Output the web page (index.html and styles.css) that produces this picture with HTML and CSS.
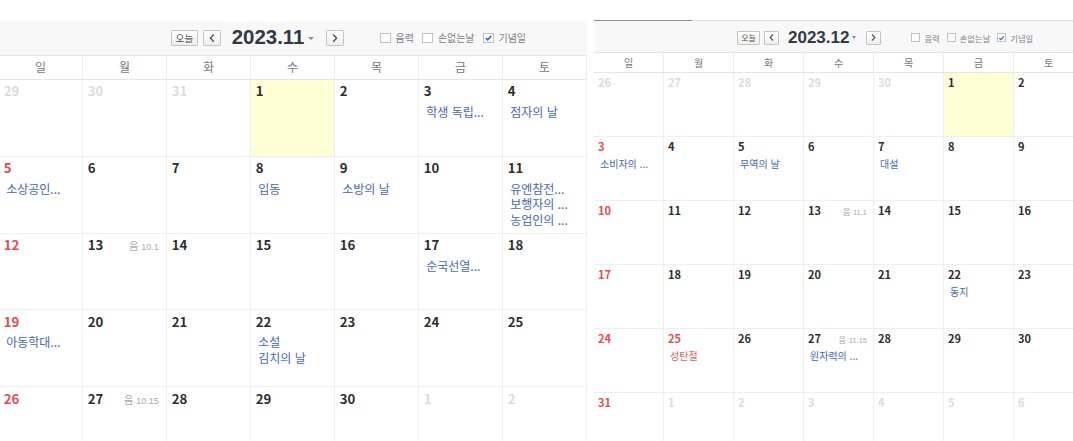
FILE: index.html
```html
<!DOCTYPE html>
<html lang="ko">
<head>
<meta charset="utf-8">
<title>달력</title>
<link rel="stylesheet" href="styles.css">
</head>
<body>
<div class="page">
  <section class="panel panel--left">
    <div class="cal cal--big">
      <div class="cal-head">
        <button class="btn btn--today">오늘</button>
        <button class="btn btn--arrow"><svg width="5" height="7" viewBox="0 0 5 7"><path d="M4 0.5L1.2 3.5L4 6.5" fill="none" stroke="#555" stroke-width="1.2"/></svg></button>
        <span class="title">2023.11</span>
        <span class="caret"></span>
        <button class="btn btn--arrow btn--next"><svg width="5" height="7" viewBox="0 0 5 7"><path d="M1 0.5L3.8 3.5L1 6.5" fill="none" stroke="#555" stroke-width="1.2"/></svg></button>
        <label class="chk chk--first"><span class="box"></span>음력</label>
        <label class="chk"><span class="box"></span>손없는날</label>
        <label class="chk"><span class="box"><svg width="8" height="8" viewBox="0 0 10 10"><path d="M2 5.2L4.2 7.4L8.2 2.8" fill="none" stroke="#2f68c8" stroke-width="1.8"/></svg></span>기념일</label>
      </div>
      <div class="dow"><span>일</span><span>월</span><span>화</span><span>수</span><span>목</span><span>금</span><span>토</span></div>
      <div class="week">
        <div class="cell off"><div class="top"><span class="num">29</span></div></div>
        <div class="cell off"><div class="top"><span class="num">30</span></div></div>
        <div class="cell off"><div class="top"><span class="num">31</span></div></div>
        <div class="cell today"><div class="top"><span class="num">1</span></div></div>
        <div class="cell"><div class="top"><span class="num">2</span></div></div>
        <div class="cell"><div class="top"><span class="num">3</span></div><div class="events"><p class="ev">학생 독립...</p></div></div>
        <div class="cell"><div class="top"><span class="num">4</span></div><div class="events"><p class="ev">점자의 날</p></div></div>
      </div>
      <div class="week">
        <div class="cell sun"><div class="top"><span class="num">5</span></div><div class="events"><p class="ev">소상공인...</p></div></div>
        <div class="cell"><div class="top"><span class="num">6</span></div></div>
        <div class="cell"><div class="top"><span class="num">7</span></div></div>
        <div class="cell"><div class="top"><span class="num">8</span></div><div class="events"><p class="ev">입동</p></div></div>
        <div class="cell"><div class="top"><span class="num">9</span></div><div class="events"><p class="ev">소방의 날</p></div></div>
        <div class="cell"><div class="top"><span class="num">10</span></div></div>
        <div class="cell"><div class="top"><span class="num">11</span></div><div class="events"><p class="ev">유엔참전...</p><p class="ev">보행자의 ...</p><p class="ev">농업인의 ...</p></div></div>
      </div>
      <div class="week">
        <div class="cell sun"><div class="top"><span class="num">12</span></div></div>
        <div class="cell"><div class="top"><span class="num">13</span><span class="lunar">음 <b>10.1</b></span></div></div>
        <div class="cell"><div class="top"><span class="num">14</span></div></div>
        <div class="cell"><div class="top"><span class="num">15</span></div></div>
        <div class="cell"><div class="top"><span class="num">16</span></div></div>
        <div class="cell"><div class="top"><span class="num">17</span></div><div class="events"><p class="ev">순국선열...</p></div></div>
        <div class="cell"><div class="top"><span class="num">18</span></div></div>
      </div>
      <div class="week">
        <div class="cell sun"><div class="top"><span class="num">19</span></div><div class="events"><p class="ev">아동학대...</p></div></div>
        <div class="cell"><div class="top"><span class="num">20</span></div></div>
        <div class="cell"><div class="top"><span class="num">21</span></div></div>
        <div class="cell"><div class="top"><span class="num">22</span></div><div class="events"><p class="ev">소설</p><p class="ev">김치의 날</p></div></div>
        <div class="cell"><div class="top"><span class="num">23</span></div></div>
        <div class="cell"><div class="top"><span class="num">24</span></div></div>
        <div class="cell"><div class="top"><span class="num">25</span></div></div>
      </div>
      <div class="week">
        <div class="cell sun"><div class="top"><span class="num">26</span></div></div>
        <div class="cell"><div class="top"><span class="num">27</span><span class="lunar">음 <b>10.15</b></span></div></div>
        <div class="cell"><div class="top"><span class="num">28</span></div></div>
        <div class="cell"><div class="top"><span class="num">29</span></div></div>
        <div class="cell"><div class="top"><span class="num">30</span></div></div>
        <div class="cell off"><div class="top"><span class="num">1</span></div></div>
        <div class="cell off"><div class="top"><span class="num">2</span></div></div>
      </div>
    </div>
  </section>

  <section class="panel panel--right">
    <div class="tabs"><span class="tab-on"></span><span class="tab-off"></span></div>
    <div class="cal">
      <div class="cal-head">
        <button class="btn btn--today">오늘</button>
        <button class="btn btn--arrow"><svg width="5" height="7" viewBox="0 0 5 7"><path d="M4 0.5L1.2 3.5L4 6.5" fill="none" stroke="#555" stroke-width="1.2"/></svg></button>
        <span class="title">2023.12</span>
        <span class="caret"></span>
        <button class="btn btn--arrow btn--next"><svg width="5" height="7" viewBox="0 0 5 7"><path d="M1 0.5L3.8 3.5L1 6.5" fill="none" stroke="#555" stroke-width="1.2"/></svg></button>
        <label class="chk chk--first"><span class="box"></span>음력</label>
        <label class="chk"><span class="box"></span>손없는날</label>
        <label class="chk"><span class="box"><svg width="8" height="8" viewBox="0 0 10 10"><path d="M2 5.2L4.2 7.4L8.2 2.8" fill="none" stroke="#2f68c8" stroke-width="1.8"/></svg></span>기념일</label>
      </div>
      <div class="dow"><span>일</span><span>월</span><span>화</span><span>수</span><span>목</span><span>금</span><span>토</span></div>
      <div class="week">
        <div class="cell off"><div class="top"><span class="num">26</span></div></div>
        <div class="cell off"><div class="top"><span class="num">27</span></div></div>
        <div class="cell off"><div class="top"><span class="num">28</span></div></div>
        <div class="cell off"><div class="top"><span class="num">29</span></div></div>
        <div class="cell off"><div class="top"><span class="num">30</span></div></div>
        <div class="cell today"><div class="top"><span class="num">1</span></div></div>
        <div class="cell"><div class="top"><span class="num">2</span></div></div>
      </div>
      <div class="week">
        <div class="cell sun"><div class="top"><span class="num">3</span></div><div class="events"><p class="ev">소비자의 ...</p></div></div>
        <div class="cell"><div class="top"><span class="num">4</span></div></div>
        <div class="cell"><div class="top"><span class="num">5</span></div><div class="events"><p class="ev">무역의 날</p></div></div>
        <div class="cell"><div class="top"><span class="num">6</span></div></div>
        <div class="cell"><div class="top"><span class="num">7</span></div><div class="events"><p class="ev">대설</p></div></div>
        <div class="cell"><div class="top"><span class="num">8</span></div></div>
        <div class="cell"><div class="top"><span class="num">9</span></div></div>
      </div>
      <div class="week">
        <div class="cell sun"><div class="top"><span class="num">10</span></div></div>
        <div class="cell"><div class="top"><span class="num">11</span></div></div>
        <div class="cell"><div class="top"><span class="num">12</span></div></div>
        <div class="cell"><div class="top"><span class="num">13</span><span class="lunar">음 <b>11.1</b></span></div></div>
        <div class="cell"><div class="top"><span class="num">14</span></div></div>
        <div class="cell"><div class="top"><span class="num">15</span></div></div>
        <div class="cell"><div class="top"><span class="num">16</span></div></div>
      </div>
      <div class="week">
        <div class="cell sun"><div class="top"><span class="num">17</span></div></div>
        <div class="cell"><div class="top"><span class="num">18</span></div></div>
        <div class="cell"><div class="top"><span class="num">19</span></div></div>
        <div class="cell"><div class="top"><span class="num">20</span></div></div>
        <div class="cell"><div class="top"><span class="num">21</span></div></div>
        <div class="cell"><div class="top"><span class="num">22</span></div><div class="events"><p class="ev">동지</p></div></div>
        <div class="cell"><div class="top"><span class="num">23</span></div></div>
      </div>
      <div class="week">
        <div class="cell sun"><div class="top"><span class="num">24</span></div></div>
        <div class="cell sun"><div class="top"><span class="num">25</span></div><div class="events"><p class="ev ev--holiday">성탄절</p></div></div>
        <div class="cell"><div class="top"><span class="num">26</span></div></div>
        <div class="cell"><div class="top"><span class="num">27</span><span class="lunar">음 <b>11.15</b></span></div><div class="events"><p class="ev">원자력의 ...</p></div></div>
        <div class="cell"><div class="top"><span class="num">28</span></div></div>
        <div class="cell"><div class="top"><span class="num">29</span></div></div>
        <div class="cell"><div class="top"><span class="num">30</span></div></div>
      </div>
      <div class="week">
        <div class="cell sun"><div class="top"><span class="num">31</span></div></div>
        <div class="cell off"><div class="top"><span class="num">1</span></div></div>
        <div class="cell off"><div class="top"><span class="num">2</span></div></div>
        <div class="cell off"><div class="top"><span class="num">3</span></div></div>
        <div class="cell off"><div class="top"><span class="num">4</span></div></div>
        <div class="cell off"><div class="top"><span class="num">5</span></div></div>
        <div class="cell off"><div class="top"><span class="num">6</span></div></div>
      </div>
    </div>
  </section>
</div>
</body>
</html>
```

FILE: styles.css
```css
* { box-sizing: border-box; }

html, body {
  margin: 0;
  padding: 0;
  background: #fff;
  overflow: hidden;
}

body {
  width: 1073px;
  height: 441px;
  font-family: "Noto Sans CJK KR", "Noto Sans", sans-serif;
  color: #333;
}

.page {
  display: flex;
  align-items: flex-start;
  width: 1073px;
  height: 441px;
  overflow: hidden;
}

.panel {
  overflow: hidden;
  flex: none;
}

.panel--left {
  width: 587px;
  height: 420px;
  margin-top: 21px;
}

.panel--right {
  width: 479px;
  height: 421px;
  margin-top: 20px;
  margin-left: 7px;
}

.tabs {
  display: flex;
  height: 1px;
  width: 490px;
}

.tab-on {
  width: 98px;
  background: #8a9098;
}

.tab-off {
  flex: 1;
  background: #dedede;
}

.cal {
  width: 490px;
}

.cal--big {
  zoom: 1.2;
  margin-left: -0.84px;
}

/* header */
.cal-head {
  display: flex;
  align-items: center;
  height: 32px;
  padding: 2px 0 0 143px;
  background: #f8f8f8;
  border-bottom: 1px solid #e3e3e3;
}

.cal--big .cal-head {
  height: 29.2px;
  padding-top: 0;
}

.btn {
  display: flex;
  align-items: center;
  justify-content: center;
  height: 14px;
  padding: 0;
  margin: 0;
  border: 1px solid #c4c4c4;
  border-radius: 1px;
  background: linear-gradient(#ffffff, #eeeeee);
  font-family: "Noto Sans CJK KR", sans-serif;
  font-size: 8px;
  line-height: 12px;
  color: #555;
}

.btn--today {
  width: 23px;
}

.btn--arrow {
  width: 15px;
  margin-left: 4px;
}

.btn--next {
  margin-left: 10px;
}

.title {
  margin-left: 9px;
  font-family: "Liberation Sans", Arial, sans-serif;
  font-weight: 700;
  font-size: 17px;
  line-height: 18px;
  color: #333947;
}

.caret {
  margin-left: 3px;
  width: 0;
  height: 0;
  border-left: 2.5px solid transparent;
  border-right: 2.5px solid transparent;
  border-top: 3px solid #8a8a8a;
}

.chk {
  display: flex;
  align-items: center;
  gap: 4px;
  margin-right: 7px;
  font-size: 8.3px;
  line-height: 12px;
  color: #808080;
}

.chk--first {
  margin-left: 30px;
}

.box {
  display: flex;
  align-items: center;
  justify-content: center;
  width: 9px;
  height: 9px;
  border: 1px solid #c2c2c2;
  background: #fff;
}

/* day of week row */
.dow {
  display: flex;
  height: 20px;
  border-bottom: 1px solid #e6e6e6;
}

.dow span {
  width: 70px;
  text-align: center;
  font-size: 10px;
  line-height: 19px;
  color: #777;
  border-right: 1px solid #ededed;
}

/* weeks */
.week {
  display: flex;
  height: 64px;
  border-bottom: 1px solid #efefef;
}

.cell {
  width: 70px;
  flex: none;
  padding: 2px 6px 0 4px;
  border-right: 1px solid #efefef;
}

.cell.today {
  background: #ffffd6;
}

.top {
  display: flex;
  justify-content: space-between;
  align-items: baseline;
  height: 15px;
  line-height: 15px;
}

.num {
  font-size: 11px;
  font-weight: 700;
  color: #2e2e2e;
}

.sun .num {
  color: #e64a4f;
}

.off .num {
  color: #dcdcdc;
}

.lunar {
  font-size: 8.5px;
  color: #ababab;
}

.lunar b {
  font-family: "Liberation Sans", Arial, sans-serif;
  font-weight: 400;
  font-size: 7.5px;
}

.events {
  margin-top: 3px;
  padding-left: 2px;
}

.ev {
  margin: 0;
  font-size: 10px;
  line-height: 13px;
  color: #4766b8;
  white-space: nowrap;
  overflow: hidden;
}

.ev--holiday {
  color: #e35e60;
}
```
